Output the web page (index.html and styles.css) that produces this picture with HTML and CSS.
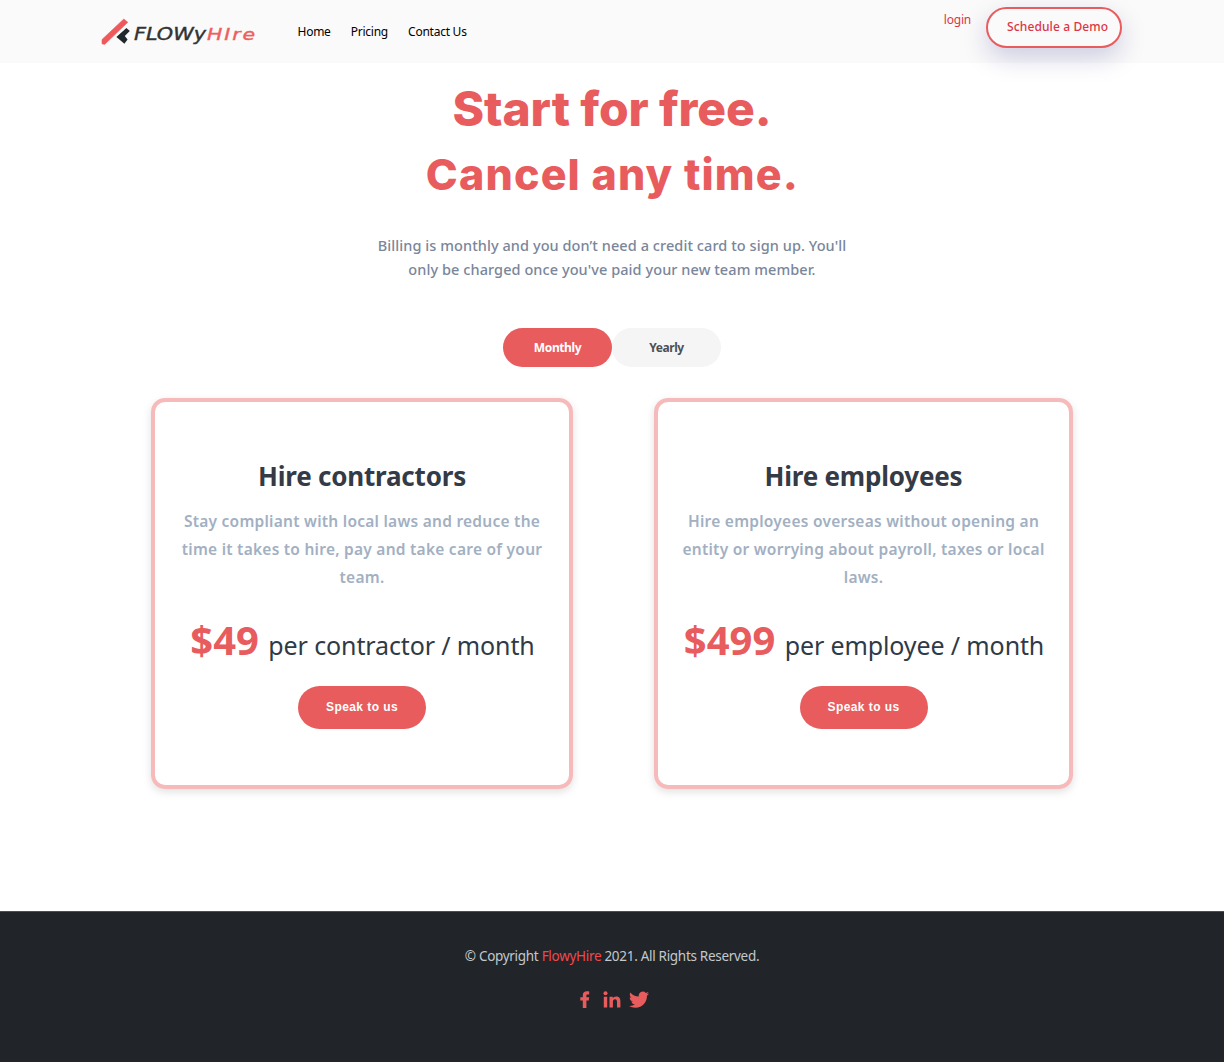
FILE: index.html
```html
<!DOCTYPE html>
<html lang="en">
<head>
<meta charset="utf-8">
<title>FlowyHire – Pricing</title>
<link rel="stylesheet" href="styles.css">
</head>
<body>
<header class="navbar">
  <a class="brand" href="#" aria-label="FlowyHire">
    <svg width="160" height="32" viewBox="100 16 160 32">
      <path d="M102 39.500 123.800 19 127.800 22.300 104.600 44.400 102 43.800Z" fill="#ee5a5c" stroke="#ee5a5c" stroke-width=".6" stroke-linejoin="round"/>
      <path d="M126.400 28 129.800 31 124.800 36 127.600 39.600 124.400 43.800 116.400 37Z" fill="#22272b"/>
      <text class="logo-dark" x="134" y="40" textLength="72" lengthAdjust="spacingAndGlyphs">FLOWy</text>
      <text class="logo-red" x="207" y="40" textLength="50" lengthAdjust="spacingAndGlyphs">HIre</text>
    </svg>
  </a>
  <nav class="links">
    <a href="#">Home</a>
    <a href="#">Pricing</a>
    <a href="#">Contact Us</a>
  </nav>
  <div class="actions">
    <a class="login" href="#">login</a>
    <a class="demo" href="#">Schedule a Demo</a>
  </div>
</header>
<main>
  <h1 class="title">Start for free.</h1>
  <h2 class="subtitle">Cancel any time.</h2>
  <p class="lead">Billing is monthly and you don’t need a credit card to sign up. You'll<br>only be charged once you've paid your new team member.</p>
  <div class="tabs">
    <button class="tab active">Monthly</button>
    <button class="tab">Yearly</button>
  </div>
  <section class="plans">
    <article class="plan contractors">
      <h3>Hire contractors</h3>
      <p class="about">Stay compliant with local laws and reduce the<br>time it takes to hire, pay and take care of your<br>team.</p>
      <p class="price"><strong>$49</strong> per contractor / month</p>
      <button class="speak">Speak to us</button>
    </article>
    <article class="plan employees">
      <h3>Hire employees</h3>
      <p class="about">Hire employees overseas without opening an<br>entity or worrying about payroll, taxes or local<br>laws.</p>
      <p class="price"><strong>$499</strong> per employee / month</p>
      <button class="speak">Speak to us</button>
    </article>
  </section>
</main>
<footer class="footer">
  <p class="copyright">© Copyright <a href="#">FlowyHire</a> 2021. All Rights Reserved.</p>
  <div class="social">
    <a href="#" aria-label="Facebook"><svg width="10" height="17" viewBox="0 0 10 17"><path d="M2.800 17V9.400H.3V6.300H2.800V4.300C2.800 1.600 4.400.3 6.800.3 7.900.3 8.800.4 9.200.4V3.500H7.700C6.600 3.500 6.400 3.900 6.400 4.700V6.300H9.200L8.800 9.400H6.400V17Z"/></svg></a>
    <a href="#" aria-label="LinkedIn"><svg width="18" height="17" viewBox="0 0 18 17"><circle cx="2.500" cy="2.300" r="2"/><path d="M.8 5.700H4.200V16.500H.8ZM6.500 5.700H9.800V7.200C10.400 6.200 11.500 5.400 13.200 5.400 16.600 5.400 17.400 7.600 17.400 10.500V16.500H14V11.200C14 9.700 13.800 8.300 12.100 8.300 10.400 8.300 9.900 9.600 9.900 11.200V16.500H6.500Z"/></svg></a>
    <a href="#" aria-label="Twitter"><svg width="20" height="17" viewBox="0 1.500 24 20.500" preserveAspectRatio="none"><path d="M23.950 4.570a10 10 0 0 1-2.820.77 4.960 4.960 0 0 0 2.160-2.720c-.95.550-2 .950-3.130 1.180a4.920 4.920 0 0 0-8.380 4.480C7.690 8.090 4.070 6.130 1.640 3.160a4.820 4.820 0 0 0-.67 2.480c0 1.710.87 3.210 2.190 4.100a4.900 4.900 0 0 1-2.230-.620v.060a4.920 4.920 0 0 0 3.950 4.830 5 5 0 0 1-2.210.080 4.940 4.940 0 0 0 4.600 3.420A9.870 9.870 0 0 1 0 19.540a14 14 0 0 0 7.550 2.210c9.050 0 14-7.500 14-13.980 0-.21 0-.42-.020-.63a9.940 9.940 0 0 0 2.460-2.550z"/></svg></a>
  </div>
</footer>
</body>
</html>
```
FILE: styles.css
```css
* { box-sizing: border-box; }
body { margin: 0; background: #fff; font-family: "Noto Sans", "Open Sans", sans-serif; color: #343a46; }
a { color: inherit; text-decoration: none; }
h1, h2, h3, p { margin: 0; white-space: nowrap; text-align: center; }
button { border: 0; padding: 0; font-family: inherit; }
.navbar { display: flex; height: 63px; padding: 0 102px 0 100px; background: #fafafa; }
.brand { display: block; width: 160px; padding-top: 16px; }
.brand svg { display: block; }
.logo-dark, .logo-red { font: italic 400 17px "DejaVu Sans", sans-serif; fill: #333; stroke: #333; stroke-width: .4px; }
.logo-red { font-size: 16px; letter-spacing: 1.5px; fill: #ee5f60; stroke: #ee5f60; }
.links { display: flex; gap: 20.500px; padding: 22px 0 0 37.500px; font-size: 12px; line-height: 20px; color: #000; font-weight: 450; letter-spacing: -.25px; }
.links a + a { margin-left: -.4px; }
.actions { display: flex; gap: 15px; margin-left: auto; color: #dc3545; }
.login { padding-top: 10px; font-size: 12px; line-height: 20px; letter-spacing: -.2px; }
.demo { width: 136px; height: 41px; margin-top: 7px; border: 2px solid #e85c5e; border-radius: 21px; font-size: 12px; line-height: 36px; font-weight: 500; letter-spacing: .12px; padding-left: 19px; background: #fafafa; box-shadow: 0 10px 26px rgba(8, 8, 116, .18); white-space: nowrap; }
main { height: 848px; padding-top: 10px; }
.title, .subtitle { font-family: Inter, sans-serif; color: #e85c5e; font-weight: 800; }
.title { font-size: 48px; line-height: 72px; letter-spacing: -.1px; }
.subtitle { font-size: 43px; line-height: 58px; letter-spacing: 1.15px; padding-left: 1px; }
.lead { margin-top: 30px; font-size: 14.500px; line-height: 24px; font-weight: 500; letter-spacing: .07px; color: #7a869a; }
.tabs { display: flex; justify-content: center; margin-top: 47px; }
.tab { width: 109px; height: 39px; border-radius: 20px; background: #f5f5f5; color: #4b5056; font-size: 12px; font-weight: 700; letter-spacing: -.4px; }
.tab.active { background: #e85c5e; color: #fff; }
.plans { display: flex; justify-content: space-between; width: 922px; margin: 31px auto 0; }
.plan { height: 391px; padding-top: 54px; border: 4px solid #f7babb; border-radius: 14px; box-shadow: 0 3px 8px rgba(0, 0, 0, .12); text-align: center; }
.contractors { width: 422px; }
.employees { width: 419px; }
.plan h3 { font-size: 26px; line-height: 40px; font-weight: 700; letter-spacing: -.2px; }
.about { margin-top: 11px; font-size: 15.500px; line-height: 28px; font-weight: 600; letter-spacing: .25px; color: #a2b0c2; }
.price { margin-top: 21px; padding-left: 1px; font-size: 25px; line-height: 56px; letter-spacing: -.12px; color: #2f3a47; }
.price strong { margin-right: 3px; font-size: 40px; letter-spacing: 0; color: #e85c5e; }
.speak { width: 128px; height: 43px; margin-top: 13px; padding-bottom: 2px; border-radius: 22px; background: #e85c5e; color: #fff; font: 700 12px "Liberation Sans", Arial, sans-serif; letter-spacing: .43px; }
.footer { height: 151px; border-top: 1px solid #4a4f53; background: #212529; }
.copyright { padding-top: 32px; font-size: 13.500px; line-height: 24px; letter-spacing: -.3px; color: #c3c8cd; }
.copyright a { color: #f0484c; }
.social { display: flex; justify-content: center; gap: 13px; padding: 23px 0 0 4px; fill: #e85c5e; }
.social svg { display: block; }
.social a + a + a { margin-left: -5px; }
```
